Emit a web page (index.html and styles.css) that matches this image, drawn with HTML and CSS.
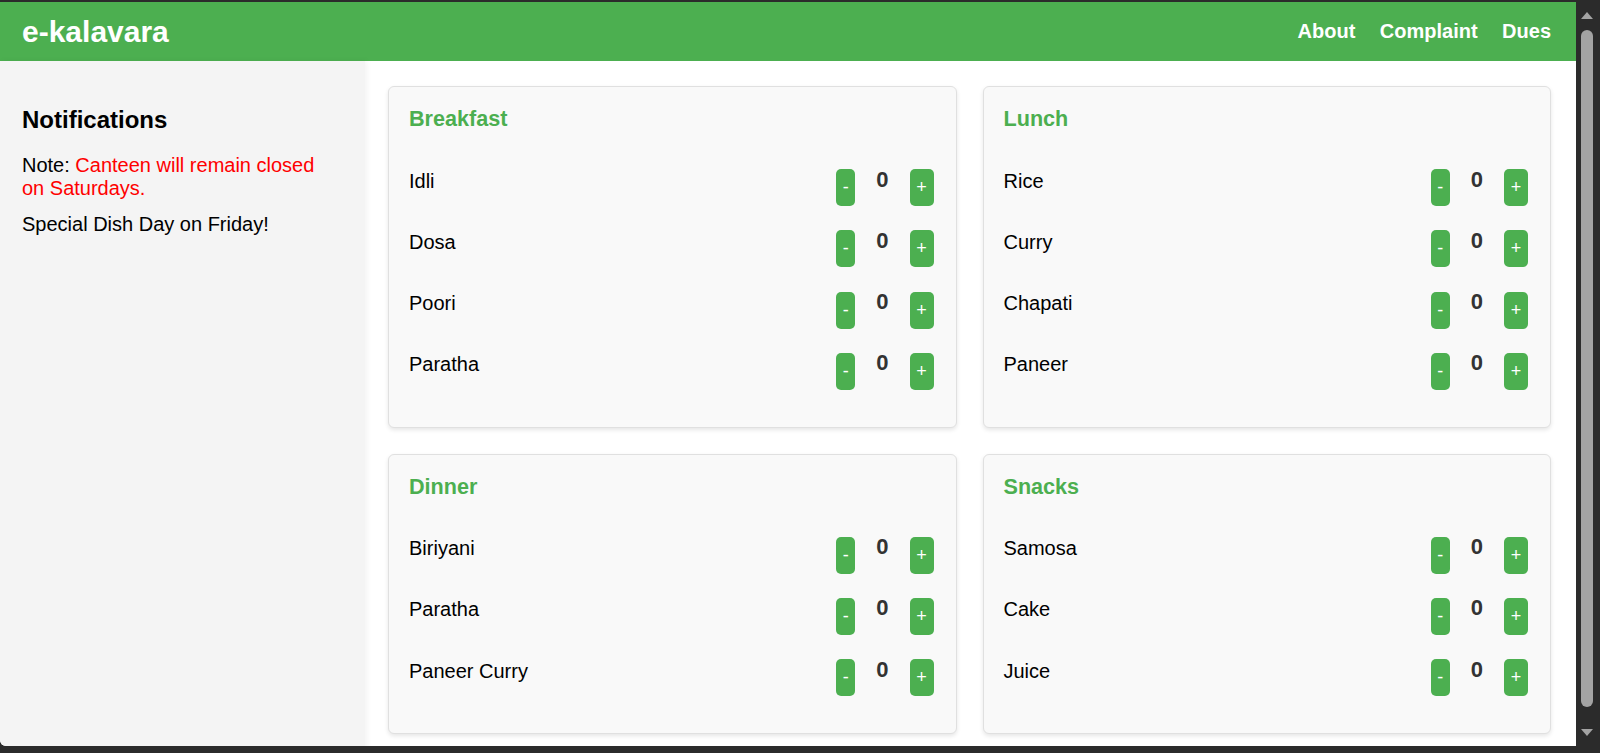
FILE: index.html
```html
<!DOCTYPE html>
<html lang="en">
<head>
<meta charset="utf-8">
<title>e-kalavara</title>
<link rel="stylesheet" href="styles.css">
</head>
<body>
<div class="window">
  <div class="viewport">
    <header class="topbar">
      <div class="brand">e-kalavara</div>
      <nav class="nav">
        <a href="#">About</a>
        <a href="#">Complaint</a>
        <a href="#">Dues</a>
      </nav>
    </header>
    <div class="layout">
      <aside class="sidebar">
        <h2>Notifications</h2>
        <p>Note: <span class="warn">Canteen will remain closed on Saturdays.</span></p>
        <p>Special Dish Day on Friday!</p>
      </aside>
      <main class="main">
        <section class="card">
          <h3>Breakfast</h3>
          <div class="item"><span class="name">Idli</span><div class="ctrl"><button class="btn minus">-</button><span class="qty">0</span><button class="btn plus">+</button></div></div>
          <div class="item"><span class="name">Dosa</span><div class="ctrl"><button class="btn minus">-</button><span class="qty">0</span><button class="btn plus">+</button></div></div>
          <div class="item"><span class="name">Poori</span><div class="ctrl"><button class="btn minus">-</button><span class="qty">0</span><button class="btn plus">+</button></div></div>
          <div class="item"><span class="name">Paratha</span><div class="ctrl"><button class="btn minus">-</button><span class="qty">0</span><button class="btn plus">+</button></div></div>
        </section>
        <section class="card">
          <h3>Lunch</h3>
          <div class="item"><span class="name">Rice</span><div class="ctrl"><button class="btn minus">-</button><span class="qty">0</span><button class="btn plus">+</button></div></div>
          <div class="item"><span class="name">Curry</span><div class="ctrl"><button class="btn minus">-</button><span class="qty">0</span><button class="btn plus">+</button></div></div>
          <div class="item"><span class="name">Chapati</span><div class="ctrl"><button class="btn minus">-</button><span class="qty">0</span><button class="btn plus">+</button></div></div>
          <div class="item"><span class="name">Paneer</span><div class="ctrl"><button class="btn minus">-</button><span class="qty">0</span><button class="btn plus">+</button></div></div>
        </section>
        <section class="card">
          <h3>Dinner</h3>
          <div class="item"><span class="name">Biriyani</span><div class="ctrl"><button class="btn minus">-</button><span class="qty">0</span><button class="btn plus">+</button></div></div>
          <div class="item"><span class="name">Paratha</span><div class="ctrl"><button class="btn minus">-</button><span class="qty">0</span><button class="btn plus">+</button></div></div>
          <div class="item"><span class="name">Paneer Curry</span><div class="ctrl"><button class="btn minus">-</button><span class="qty">0</span><button class="btn plus">+</button></div></div>
        </section>
        <section class="card">
          <h3>Snacks</h3>
          <div class="item"><span class="name">Samosa</span><div class="ctrl"><button class="btn minus">-</button><span class="qty">0</span><button class="btn plus">+</button></div></div>
          <div class="item"><span class="name">Cake</span><div class="ctrl"><button class="btn minus">-</button><span class="qty">0</span><button class="btn plus">+</button></div></div>
          <div class="item"><span class="name">Juice</span><div class="ctrl"><button class="btn minus">-</button><span class="qty">0</span><button class="btn plus">+</button></div></div>
        </section>
      </main>
    </div>
  </div>
  <div class="scrollbar">
    <div class="arrow up"></div>
    <div class="track"><div class="thumb"></div></div>
    <div class="arrow down"></div>
  </div>
</div>
</body>
</html>
```

FILE: styles.css
```css
* { box-sizing: border-box; }

html, body {
  margin: 0;
  height: 753px;
  overflow: hidden;
  background: #2b2b2b;
  font-family: "Liberation Sans", Arial, sans-serif;
}

.window {
  display: flex;
  height: 753px;
  padding-top: 2px;
}

.viewport {
  width: 1576px;
  height: 744px;
  overflow: hidden;
  background: #ffffff;
  border-bottom-left-radius: 6px;
  display: flex;
  flex-direction: column;
}

.topbar {
  flex: 0 0 59px;
  height: 59px;
  background: #4caf50;
  color: #fff;
  display: flex;
  align-items: center;
  justify-content: space-between;
  padding: 0 25px 0 22px;
}

.brand {
  font-size: 30px;
  font-weight: bold;
}

.nav {
  display: flex;
  gap: 24.5px;
}

.nav a {
  color: #fff;
  text-decoration: none;
  font-size: 20px;
  font-weight: bold;
}

.layout {
  flex: 1 0 auto;
  display: flex;
}

.sidebar {
  flex: 0 0 365px;
  width: 365px;
  background: #f4f4f4;
  padding: 45px 30px 0 22px;
  box-shadow: 2px 0 6px rgba(0, 0, 0, 0.05);
  position: relative;
  z-index: 1;
}

.sidebar h2 {
  margin: 0 0 20px;
  font-size: 24px;
  font-weight: bold;
  color: #000;
}

.sidebar p {
  margin: 0 0 13px;
  font-size: 20px;
  color: #000;
}

.warn { color: #ff0000; }

.main {
  flex: 1;
  padding: 25px 25px 25px 23px;
  display: grid;
  grid-template-columns: 1fr 1fr;
  column-gap: 26px;
  row-gap: 26px;
  align-content: start;
}

.card {
  background: #f9f9f9;
  border: 1px solid #e0e0e0;
  border-radius: 6px;
  box-shadow: 0 2px 4px rgba(0, 0, 0, 0.1);
  padding: 19px 22px 26.5px 20px;
}

.card h3 {
  margin: 0 0 23px;
  font-size: 21.6px;
  font-weight: bold;
  color: #4caf50;
}

.item {
  display: flex;
  justify-content: space-between;
  align-items: flex-start;
  padding: 11.5px 0 10.3px;
}

.name {
  font-size: 20px;
  color: #000;
  margin-top: 3px;
}

.ctrl {
  display: flex;
  align-items: flex-start;
}

.btn {
  height: 37px;
  margin-top: 2.5px;
  padding: 0;
  border: none;
  border-radius: 5px;
  background: #4caf50;
  color: #fff;
  font-family: "Liberation Sans", Arial, sans-serif;
  font-size: 18px;
  line-height: 37px;
  text-align: center;
}

.btn.minus { width: 19px; }
.btn.plus { width: 24px; }

.qty {
  font-size: 22px;
  font-weight: bold;
  color: #333;
  margin: 0 21px;
}

.scrollbar {
  width: 24px;
  height: 744px;
  margin-top: -2px;
  display: flex;
  flex-direction: column;
  align-items: center;
  padding: 12px 6px 8px 4px;
  background: #2b2b2b;
}

.arrow {
  width: 0;
  height: 0;
  border-left: 6px solid transparent;
  border-right: 6px solid transparent;
}

.arrow.up { border-bottom: 7px solid #a3a3a3; }
.arrow.down { border-top: 7px solid #a3a3a3; }

.track {
  flex: 1;
  width: 12px;
  padding: 11px 0 22px;
  display: flex;
}

.thumb {
  flex: 1;
  background: #a3a3a3;
  border-radius: 6px;
}
```
